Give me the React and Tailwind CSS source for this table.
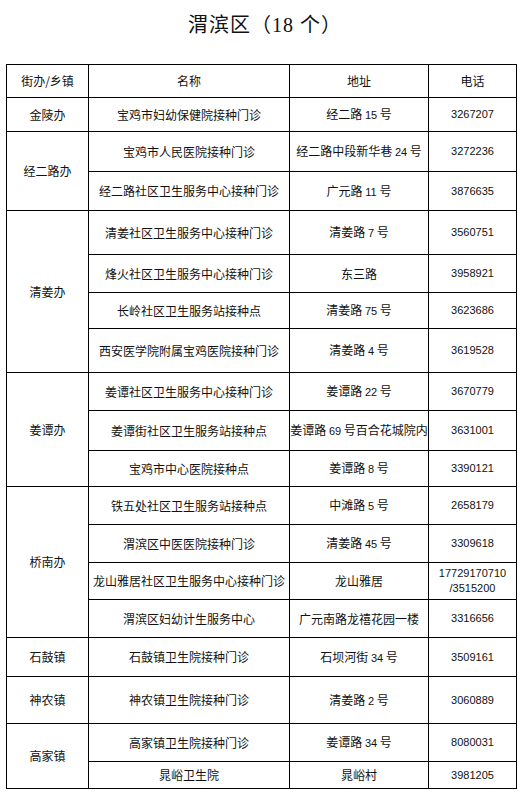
import React from 'react';

const groups = [
  { area: '金陵办', rows: [['宝鸡市妇幼保健院接种门诊', '经二路 15 号', '3267207']] },
  {
    area: '经二路办',
    rows: [
      ['宝鸡市人民医院接种门诊', '经二路中段新华巷 24 号', '3272236'],
      ['经二路社区卫生服务中心接种门诊', '广元路 11 号', '3876635'],
    ],
  },
  {
    area: '清姜办',
    rows: [
      ['清姜社区卫生服务中心接种门诊', '清姜路 7 号', '3560751'],
      ['烽火社区卫生服务中心接种门诊', '东三路', '3958921'],
      ['长岭社区卫生服务站接种点', '清姜路 75 号', '3623686'],
      ['西安医学院附属宝鸡医院接种门诊', '清姜路 4 号', '3619528'],
    ],
  },
  {
    area: '姜谭办',
    rows: [
      ['姜谭社区卫生服务中心接种门诊', '姜谭路 22 号', '3670779'],
      ['姜谭街社区卫生服务站接种点', '姜谭路 69 号百合花城院内', '3631001'],
      ['宝鸡市中心医院接种点', '姜谭路 8 号', '3390121'],
    ],
  },
  {
    area: '桥南办',
    rows: [
      ['铁五处社区卫生服务站接种点', '中滩路 5 号', '2658179'],
      ['渭滨区中医医院接种门诊', '清姜路 45 号', '3309618'],
      ['龙山雅居社区卫生服务中心接种门诊', '龙山雅居', '17729170710\n/3515200'],
      ['渭滨区妇幼计生服务中心', '广元南路龙禧花园一楼', '3316656'],
    ],
  },
  { area: '石鼓镇', rows: [['石鼓镇卫生院接种门诊', '石坝河街 34 号', '3509161']] },
  { area: '神农镇', rows: [['神农镇卫生院接种门诊', '清姜路 2 号', '3060889']] },
  {
    area: '高家镇',
    rows: [
      ['高家镇卫生院接种门诊', '姜谭路 34 号', '8080031'],
      ['晁峪卫生院', '晁峪村', '3981205'],
    ],
  },
];

const spanClass = { 1: 'row-span-1', 2: 'row-span-2', 3: 'row-span-3', 4: 'row-span-4' };

// digits are printed a bit smaller than the hanzi, like the original sheet
const withDigits = (text) => (
  <span className="whitespace-pre">
    {text.split(/(\d+)/).map((part, i) =>
      /^\d+$/.test(part) ? (
        <span key={i} className="text-[11px]" style={{ fontFamily: '"Liberation Sans", sans-serif' }}>
          {part}
        </span>
      ) : (
        part
      )
    )}
  </span>
);

const Cell = ({ children, className = '' }) => (
  <div className={`flex items-center justify-center text-center border-r border-b border-black ${className}`}>
    {children}
  </div>
);

const App = () => {
  return (
    <div
      className="w-[530px] h-[801px] bg-white text-[#111] overflow-hidden"
      style={{ fontFamily: '"Noto Sans CJK SC", sans-serif' }}
    >
      <div className="h-[50px] flex items-center justify-center mb-[14px]">
        <h1
          className="text-[20px] font-normal tracking-[1px]"
          style={{ fontFamily: '"Liberation Serif", "Noto Sans CJK SC", serif' }}
        >
          渭滨区（18 个）
        </h1>
      </div>

      <div className="ml-[6px] w-[511px] border-l border-t border-black grid grid-cols-[82px_201px_139px_88px] grid-rows-[33px_34px_40px_39px_44px_38px_36px_44px_38px_40px_36px_38px_38px_37px_38px_39px_47px_38px_27px] text-[12px]">
        <Cell className="col-start-1">街办/乡镇</Cell>
        <Cell className="col-start-2">名称</Cell>
        <Cell className="col-start-3">地址</Cell>
        <Cell className="col-start-4">电话</Cell>

        {groups.map((g) => (
          <React.Fragment key={g.area}>
            <Cell className={`col-start-1 ${spanClass[g.rows.length]}`}>{g.area}</Cell>
            {g.rows.map(([name, addr, phone]) => (
              <React.Fragment key={name}>
                <Cell className="col-start-2">{name}</Cell>
                <Cell className="col-start-3">{withDigits(addr)}</Cell>
                <Cell className="col-start-4">
                  <span
                    className="text-[11px] leading-[15px] whitespace-pre-line"
                    style={{ fontFamily: '"Liberation Sans", sans-serif' }}
                  >
                    {phone}
                  </span>
                </Cell>
              </React.Fragment>
            ))}
          </React.Fragment>
        ))}
      </div>
    </div>
  );
};

export default App;
